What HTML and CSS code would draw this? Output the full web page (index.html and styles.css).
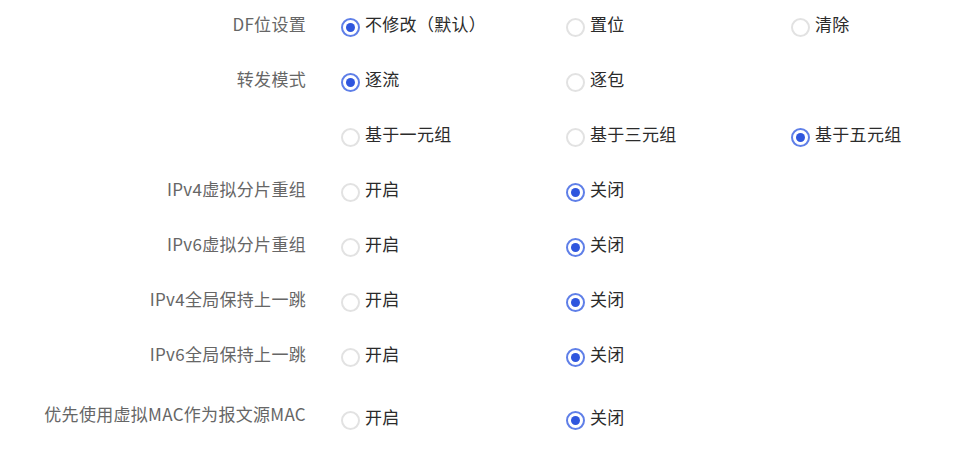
FILE: index.html
```html
<!DOCTYPE html>
<html>
<head>
    <title>转发设置</title>
    <link rel="stylesheet" href="styles.css">
</head>
<body>
    <form class="settings-form">
        <div class="form-row">
            <div class="form-label">DF位设置</div>
            <div class="form-options">
                <label class="radio-item"><span class="radio checked"></span>不修改（默认）</label>
                <label class="radio-item"><span class="radio"></span>置位</label>
                <label class="radio-item"><span class="radio"></span>清除</label>
            </div>
        </div>
        <div class="form-row">
            <div class="form-label">转发模式</div>
            <div class="form-options">
                <label class="radio-item"><span class="radio checked"></span>逐流</label>
                <label class="radio-item"><span class="radio"></span>逐包</label>
            </div>
        </div>
        <div class="form-row">
            <div class="form-label"></div>
            <div class="form-options">
                <label class="radio-item"><span class="radio"></span>基于一元组</label>
                <label class="radio-item"><span class="radio"></span>基于三元组</label>
                <label class="radio-item"><span class="radio checked"></span>基于五元组</label>
            </div>
        </div>
        <div class="form-row">
            <div class="form-label">IPv4虚拟分片重组</div>
            <div class="form-options">
                <label class="radio-item"><span class="radio"></span>开启</label>
                <label class="radio-item"><span class="radio checked"></span>关闭</label>
            </div>
        </div>
        <div class="form-row">
            <div class="form-label">IPv6虚拟分片重组</div>
            <div class="form-options">
                <label class="radio-item"><span class="radio"></span>开启</label>
                <label class="radio-item"><span class="radio checked"></span>关闭</label>
            </div>
        </div>
        <div class="form-row">
            <div class="form-label">IPv4全局保持上一跳</div>
            <div class="form-options">
                <label class="radio-item"><span class="radio"></span>开启</label>
                <label class="radio-item"><span class="radio checked"></span>关闭</label>
            </div>
        </div>
        <div class="form-row">
            <div class="form-label">IPv6全局保持上一跳</div>
            <div class="form-options">
                <label class="radio-item"><span class="radio"></span>开启</label>
                <label class="radio-item"><span class="radio checked"></span>关闭</label>
            </div>
        </div>
        <div class="form-row last-row">
            <div class="form-label">优先使用虚拟MAC作为报文源MAC</div>
            <div class="form-options options-low">
                <label class="radio-item"><span class="radio"></span>开启</label>
                <label class="radio-item"><span class="radio checked"></span>关闭</label>
            </div>
        </div>
    </form>
</body>
</html>
```

FILE: styles.css
```css
body {
    margin: 0;
    background-color: white;
    font-family: "Noto Sans CJK SC", "Noto Sans", sans-serif;
    font-size: 17px;
    letter-spacing: 0.3px;
}

.settings-form {
    padding-top: 12px;
}

.form-row {
    display: flex;
    align-items: flex-start;
    height: 55px;
    line-height: 24px;
}

.last-row {
    margin-top: 5px;
}

.form-label {
    width: 306px;
    flex-shrink: 0;
    text-align: right;
    color: #666;
}

.form-options {
    display: flex;
    padding-left: 35px;
    color: #2b2b2b;
}

.options-low {
    padding-top: 3px;
}

.radio-item {
    display: flex;
    align-items: flex-start;
    width: 225px;
    cursor: pointer;
}

.radio-item:last-child {
    width: auto;
}

.radio {
    box-sizing: border-box;
    flex-shrink: 0;
    width: 19px;
    height: 19px;
    margin-top: 6px;
    margin-right: 5px;
    border: 2px solid #e2e2e2;
    border-radius: 50%;
    display: flex;
    align-items: center;
    justify-content: center;
}

.radio.checked {
    border-color: #5f7fe8;
}

.radio.checked::after {
    content: "";
    width: 9px;
    height: 9px;
    border-radius: 50%;
    background-color: #2f56de;
}
```
